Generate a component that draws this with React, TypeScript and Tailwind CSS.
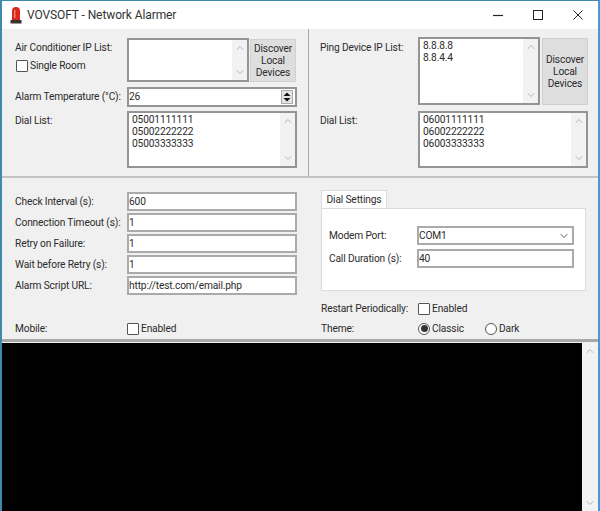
import React from "react";
import {ChevronDown, ChevronUp} from "lucide-react";

function ScrollBar({className = "w-[15px]"}: {className?: string}) {
    return (
        <div className={`flex flex-col items-center justify-between py-[2px] bg-[#f2f1f4] text-[#b4b4b4] ${className}`}>
            <ChevronUp size={12} strokeWidth={2}/>
            <ChevronDown size={12} strokeWidth={2}/>
        </div>
    )
}

function Memo({lines = [], className = ""}: {lines?: string[]; className?: string}) {
    return (
        <div className={`flex border-2 border-[#949494] bg-white ${className}`}>
            <div className="flex-1 pl-[3px] pt-[1px] leading-[12px]">
                {lines.map((line) => <div key={line}>{line}</div>)}
            </div>
            <ScrollBar/>
        </div>
    )
}

function Field({value, className = ""}: {value: string; className?: string}) {
    return (
        <div className={`flex items-center h-[19px] border-2 border-[#aaaaaa] bg-white ${className}`}>
            {value}
        </div>
    )
}

function Row({label, value}: {label: string; value: string}) {
    return (
        <div className="flex items-center h-[19px]">
            <span className="w-[112px]">{label}</span>
            <Field value={value} className="w-[170px]"/>
        </div>
    )
}

function Discover({className = ""}: {className?: string}) {
    return (
        <div className={`flex flex-col items-center justify-center bg-[#dedede] border border-[#d0d0d0] leading-[12px] ${className}`}>
            <span>Discover</span>
            <span>Local</span>
            <span>Devices</span>
        </div>
    )
}

function Check({label, className = ""}: {label: string; className?: string}) {
    return (
        <div className={`flex items-center gap-[2px] ${className}`}>
            <span className="w-[12px] h-[12px] border border-[#555] rounded-[1px] bg-white"/>
            <span>{label}</span>
        </div>
    )
}

function Radio({label, checked = false, className = ""}: {label: string; checked?: boolean; className?: string}) {
    return (
        <div className={`flex items-center gap-[2px] ${className}`}>
            <span className="flex items-center justify-center w-[12px] h-[12px] border border-[#555] rounded-full bg-white">
                {checked ? <span className="w-[7px] h-[7px] rounded-full bg-[#333]"/> : null}
            </span>
            <span>{label}</span>
        </div>
    )
}

export default function App() {
    return (
        <div className="flex flex-col w-[600px] h-[511px] overflow-hidden whitespace-nowrap bg-[#f0f0f0] border-t border-t-[#3f8aa8] border-l-2 border-l-[#3f8aa8] border-r-2 border-r-[#4a96d8] text-[10.2px] tracking-[-0.15px] text-[#2b2b2b] [font-family:Roboto,sans-serif]">

            <header className="flex items-center shrink-0 h-[28px] bg-white">
                <svg width="12" height="18" viewBox="0 0 12 18" className="ml-[8px]">
                    <path d="M2 14V5a4 4 0 0 1 8 0v9z" fill="#d8281c"/>
                    <path d="M4 4h1.5v8H4z" fill="#f08070"/>
                    <path d="M0.5 14h11v3.5h-11z" fill="#3a3030"/>
                </svg>
                <span className="ml-[5px] text-[12px] tracking-[-0.1px] text-[#333]">VOVSOFT - Network Alarmer</span>
                <div className="flex items-center ml-auto mr-[15px] gap-[30px]">
                    <svg width="10" height="10" viewBox="0 0 10 10"><path d="M0 5.5h10" stroke="#222" strokeWidth="1.2"/></svg>
                    <svg width="10" height="10" viewBox="0 0 10 10"><rect x="0.5" y="0.5" width="9" height="9" fill="none" stroke="#222"/></svg>
                    <svg width="10" height="10" viewBox="0 0 10 10"><path d="M0.5 0.5l9 9M9.5 0.5l-9 9" stroke="#222"/></svg>
                </div>
            </header>

            <section className="flex shrink-0 h-[149px] border-b-2 border-[#c4c4c4]">
                <div className="flex flex-col w-[307px] pl-[13px] pt-[9px] border-r border-[#a8a8a8]">
                    <div className="flex h-[44px]">
                        <div className="w-[112px]">
                            <div className="mt-[2px]">Air Conditioner IP List:</div>
                            <Check label="Single Room" className="mt-[3px] ml-[1px]"/>
                        </div>
                        <Memo className="w-[122px]"/>
                        <Discover className="w-[46px] ml-[1px] mt-[1px]"/>
                    </div>
                    <div className="flex items-center h-[20px] mt-[5px]">
                        <span className="w-[112px]">Alarm Temperature (°C):</span>
                        <div className="flex items-center justify-between w-[170px] h-[20px] border-2 border-[#949494] bg-white pr-[2px]">
                            <span>26</span>
                            <svg width="12" height="14" viewBox="0 0 12 14">
                                <rect x="0.5" y="0.5" width="11" height="13" fill="#e4e4e4" stroke="#aaa"/>
                                <path d="M6 2.5l3.5 3.5h-7zM6 11.5l3.5-3.5h-7z" fill="#111"/>
                            </svg>
                        </div>
                    </div>
                    <div className="flex mt-[4px]">
                        <div className="w-[112px] mt-[2px]">Dial List:</div>
                        <Memo className="w-[170px] h-[57px]" lines={["05001111111", "05002222222", "05003333333"]}/>
                    </div>
                </div>
                <div className="flex flex-col pl-[11px] pt-[8px]">
                    <div className="flex h-[68px]">
                        <div className="w-[98px] mt-[3px]">Ping Device IP List:</div>
                        <Memo className="w-[122px]" lines={["8.8.8.8", "8.8.4.4"]}/>
                        <Discover className="w-[46px] ml-[2px] mt-[1px]"/>
                    </div>
                    <div className="flex mt-[6px]">
                        <div className="w-[98px] mt-[2px]">Dial List:</div>
                        <Memo className="w-[170px] h-[57px]" lines={["06001111111", "06002222222", "06003333333"]}/>
                    </div>
                </div>
            </section>

            <section className="flex shrink-0 h-[164px] border-b-[3px] border-[#a8a8a8]">
                <div className="flex flex-col w-[307px] pl-[13px] pt-[14px]">
                    <div className="flex flex-col gap-[2px]">
                        <Row label="Check Interval (s):" value="600"/>
                        <Row label="Connection Timeout (s):" value="1"/>
                        <Row label="Retry on Failure:" value="1"/>
                        <Row label="Wait before Retry (s):" value="1"/>
                        <Row label="Alarm Script URL:" value="http://test.com/email.php"/>
                    </div>
                    <div className="flex items-center mt-[25px]">
                        <span className="w-[112px]">Mobile:</span>
                        <Check label="Enabled" className="mt-[1px]"/>
                    </div>
                </div>
                <div className="flex flex-col pl-[12px] pt-[12px]">
                    <div className="flex items-center justify-center w-[66px] h-[19px] bg-white border border-b-0 border-[#dcdcdc]">Dial Settings</div>
                    <div className="flex flex-col gap-[4px] w-[265px] h-[83px] -mt-px pl-[7px] pt-[17px] bg-white border border-[#dcdcdc]">
                        <div className="flex items-center h-[19px]">
                            <span className="w-[88px]">Modem Port:</span>
                            <div className="flex items-center justify-between w-[157px] h-[19px] border-2 border-[#aaaaaa] pr-[2px]">
                                <span>COM1</span>
                                <ChevronDown size={12} className="text-[#555]"/>
                            </div>
                        </div>
                        <div className="flex items-center h-[19px]">
                            <span className="w-[88px]">Call Duration (s):</span>
                            <Field value="40" className="w-[157px]"/>
                        </div>
                    </div>
                    <div className="flex items-center mt-[10px]">
                        <span className="w-[97px]">Restart Periodically:</span>
                        <Check label="Enabled"/>
                    </div>
                    <div className="flex items-center mt-[5px]">
                        <span className="w-[97px]">Theme:</span>
                        <Radio label="Classic" checked className="w-[67px]"/>
                        <Radio label="Dark"/>
                    </div>
                </div>
            </section>

            <section className="flex flex-1 min-h-0 pt-[1px]">
                <div className="flex-1 bg-black"/>
                <ScrollBar className="w-[16px]"/>
            </section>

        </div>
    )
}
